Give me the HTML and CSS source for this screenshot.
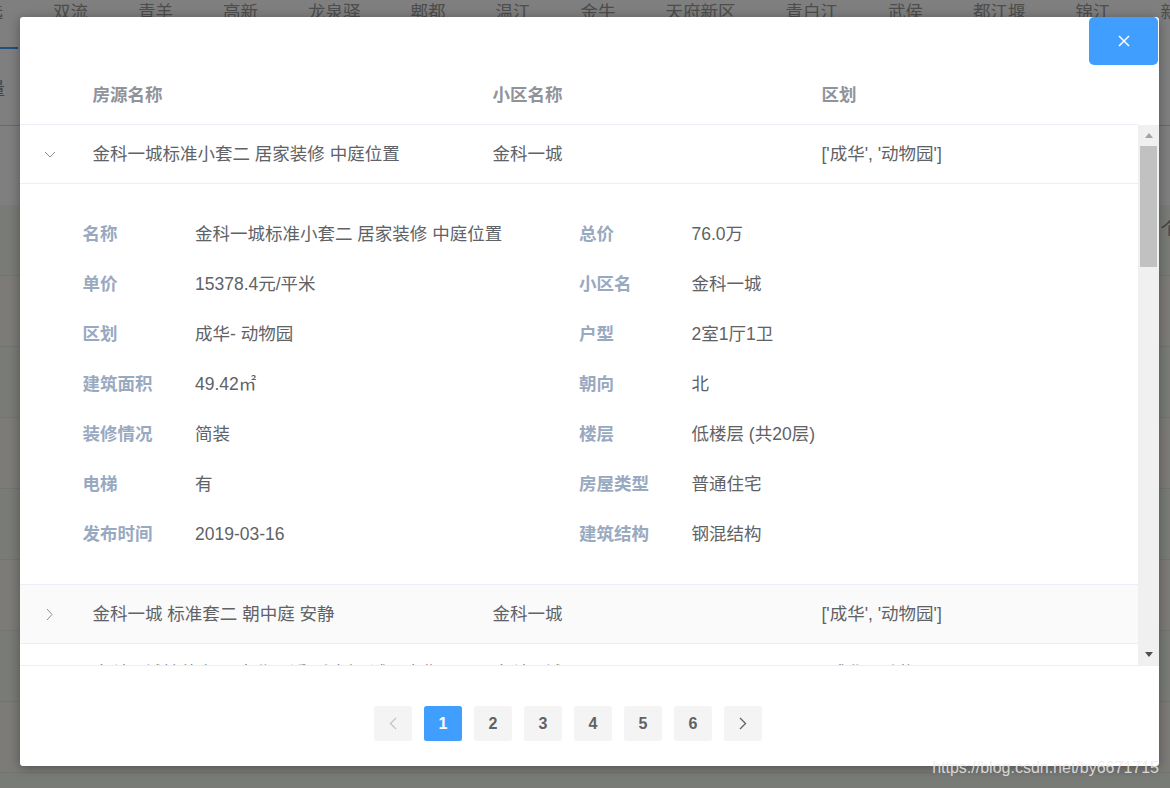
FILE: index.html
```html
<!DOCTYPE html>
<html lang="zh-CN">
<head>
<meta charset="utf-8">
<title>房源列表</title>
<link rel="stylesheet" href="styles.css">
</head>
<body>
<div class="page">
  <nav class="district-tabs">
    <span class="tab">全选</span>
    <span class="tab">双流</span>
    <span class="tab">青羊</span>
    <span class="tab">高新</span>
    <span class="tab">龙泉驿</span>
    <span class="tab">郫都</span>
    <span class="tab">温江</span>
    <span class="tab">金牛</span>
    <span class="tab">天府新区</span>
    <span class="tab">青白江</span>
    <span class="tab">武侯</span>
    <span class="tab">都江堰</span>
    <span class="tab">锦江</span>
    <span class="tab">新都</span>
  </nav>
  <div class="active-bar"></div>
  <div class="filter-row"><span class="filter-label">数量</span><span class="filter-right">个</span></div>
  <div class="bg-table">
    <div class="bg-row bg-first"></div>
    <div class="bg-row bg-green"></div>
    <div class="bg-row bg-warm"></div>
    <div class="bg-row bg-green"></div>
    <div class="bg-row bg-warm"></div>
    <div class="bg-row bg-green"></div>
    <div class="bg-row bg-warm"></div>
    <div class="bg-row bg-green"></div>
    <div class="bg-row bg-warm"></div>
    <div class="bg-row bg-green"></div>
  </div>
</div>

<div class="mask"></div>

<div class="dialog">
  <button class="dialog-close" type="button" aria-label="关闭">
    <svg width="12" height="12" viewBox="0 0 12 12"><path d="M1 1 L11 11 M11 1 L1 11" stroke="#fff" stroke-width="1.5" fill="none"/></svg>
  </button>

  <div class="table">
    <div class="thead">
      <div class="head-row">
        <div class="cell"></div>
        <div class="cell">房源名称</div>
        <div class="cell">小区名称</div>
        <div class="cell">区划</div>
      </div>
      <div class="gutter"></div>
    </div>

    <div class="body-wrap">
      <div class="tbody">
        <div class="row">
          <div class="cell expand-cell">
            <svg width="12" height="7" viewBox="0 0 12 7"><path d="M1 1 L6 6 L11 1" stroke="#8c8f96" stroke-width="1" fill="none"/></svg>
          </div>
          <div class="cell">金科一城标准小套二 居家装修 中庭位置</div>
          <div class="cell">金科一城</div>
          <div class="cell">['成华', '动物园']</div>
        </div>
        <div class="expanded">
          <div class="form-item"><span class="label">名称</span><span class="value">金科一城标准小套二 居家装修 中庭位置</span></div>
          <div class="form-item"><span class="label">总价</span><span class="value">76.0万</span></div>
          <div class="form-item"><span class="label">单价</span><span class="value">15378.4元/平米</span></div>
          <div class="form-item"><span class="label">小区名</span><span class="value">金科一城</span></div>
          <div class="form-item"><span class="label">区划</span><span class="value">成华- 动物园</span></div>
          <div class="form-item"><span class="label">户型</span><span class="value">2室1厅1卫</span></div>
          <div class="form-item"><span class="label">建筑面积</span><span class="value">49.42㎡</span></div>
          <div class="form-item"><span class="label">朝向</span><span class="value">北</span></div>
          <div class="form-item"><span class="label">装修情况</span><span class="value">简装</span></div>
          <div class="form-item"><span class="label">楼层</span><span class="value">低楼层 (共20层)</span></div>
          <div class="form-item"><span class="label">电梯</span><span class="value">有</span></div>
          <div class="form-item"><span class="label">房屋类型</span><span class="value">普通住宅</span></div>
          <div class="form-item"><span class="label">发布时间</span><span class="value">2019-03-16</span></div>
          <div class="form-item"><span class="label">建筑结构</span><span class="value">钢混结构</span></div>
        </div>
        <div class="row row-hover">
          <div class="cell expand-cell">
            <svg width="7" height="13" viewBox="0 0 7 13"><path d="M1 1 L6 6.5 L1 12" stroke="#8c8f96" stroke-width="1" fill="none"/></svg>
          </div>
          <div class="cell">金科一城 标准套二 朝中庭 安静</div>
          <div class="cell">金科一城</div>
          <div class="cell">['成华', '动物园']</div>
        </div>
        <div class="row">
          <div class="cell expand-cell">
            <svg width="7" height="13" viewBox="0 0 7 13"><path d="M1 1 L6 6.5 L1 12" stroke="#8c8f96" stroke-width="1" fill="none"/></svg>
          </div>
          <div class="cell">金科一城精装套三 南北通透 采光好 诚心出售</div>
          <div class="cell">金科一城</div>
          <div class="cell">['成华', '动物园']</div>
        </div>
      </div>
      <div class="scrollbar">
        <div class="sb-btn"><span class="tri-up"></span></div>
        <div class="sb-thumb"></div>
        <div class="sb-space"></div>
        <div class="sb-btn"><span class="tri-down"></span></div>
      </div>
    </div>
  </div>

  <div class="pager">
    <button class="pg-btn pg-disabled" type="button">
      <svg width="8" height="13" viewBox="0 0 8 13"><path d="M7 1 L1.5 6.5 L7 12" stroke="#c0c4cc" stroke-width="1.3" fill="none"/></svg>
    </button>
    <button class="pg-btn pg-active" type="button">1</button>
    <button class="pg-btn" type="button">2</button>
    <button class="pg-btn" type="button">3</button>
    <button class="pg-btn" type="button">4</button>
    <button class="pg-btn" type="button">5</button>
    <button class="pg-btn" type="button">6</button>
    <button class="pg-btn" type="button">
      <svg width="8" height="13" viewBox="0 0 8 13"><path d="M1 1 L6.5 6.5 L1 12" stroke="#606266" stroke-width="1.3" fill="none"/></svg>
    </button>
  </div>
</div>

<div class="watermark">https://blog.csdn.net/by6671715</div>
</body>
</html>
```

FILE: styles.css
```css
* { box-sizing: border-box; }

html, body {
  margin: 0;
  padding: 0;
}

body {
  width: 1170px;
  height: 788px;
  overflow: hidden;
  position: relative;
  background: #ffffff;
  color: #606266;
  font-family: "Liberation Sans", "Noto Sans CJK SC", sans-serif;
}

/* ---------- page behind the dialog ---------- */
.page {
  height: 788px;
  overflow: hidden;
}

.district-tabs {
  display: flex;
  margin-left: -57px;
  white-space: nowrap;
  font-size: 17.5px;
  line-height: 24px;
  color: #9a9a9a;
}

.tab {
  flex: none;
  padding: 0 25px;
}

.active-bar {
  width: 18px;
  height: 2px;
  margin-top: 23px;
  background: #409eff;
}

.filter-row {
  height: 77px;
  display: flex;
  align-items: center;
  justify-content: space-between;
  border-bottom: 1px solid #cfd2d8;
  font-size: 17.5px;
  color: #8a8a8a;
}

.filter-label {
  margin-left: -30px;
}

.filter-right {
  margin-right: -8px;
  margin-top: 280px;
}

.bg-row {
  height: 71px;
  border-bottom: 1px solid #e4e6ea;
}

.bg-first {
  height: 79px;
  border-bottom: 0;
}

.bg-green { background: #f2f7ee; }
.bg-warm { background: #fbf6f0; }

.mask {
  position: absolute;
  inset: 0;
  background: rgba(0, 0, 0, 0.5);
}

/* ---------- dialog ---------- */
.dialog {
  position: absolute;
  left: 20px;
  top: 17px;
  width: 1139px;
  height: 749px;
  padding-top: 49px;
  background: #ffffff;
  border-radius: 3px;
  box-shadow: 0 2px 12px rgba(0, 0, 0, 0.35);
  display: flex;
  flex-direction: column;
}

.dialog-close {
  position: absolute;
  top: 0;
  right: 1px;
  width: 69px;
  height: 48px;
  border: 0;
  padding: 0;
  border-radius: 5px;
  background: #409eff;
  display: flex;
  align-items: center;
  justify-content: center;
}

.table {
  font-size: 17.5px;
  line-height: 23px;
}

.thead {
  display: flex;
}

.head-row,
.row {
  display: grid;
  grid-template-columns: 60px 400px 329px 1fr;
  align-items: center;
  height: 59px;
  border-bottom: 1px solid #ebeef5;
}

.head-row {
  flex: 1;
  font-weight: bold;
  color: #909399;
}

.gutter {
  width: 21px;
  flex: none;
}

.cell {
  padding-left: 12.5px;
  white-space: nowrap;
}

.expand-cell {
  padding-left: 0;
  display: flex;
  justify-content: center;
  align-items: center;
  padding-right: 1px;
}

.row-hover {
  background: #fafafa;
}

.body-wrap {
  display: flex;
  height: 541px;
  border-bottom: 1px solid #ebeef5;
}

.tbody {
  flex: 1;
  overflow: hidden;
}

.expanded {
  display: grid;
  grid-template-columns: 1fr 1fr;
  padding: 25px 62.5px;
  height: 401px;
  border-bottom: 1px solid #ebeef5;
}

.form-item {
  display: flex;
  align-items: center;
  height: 50px;
  white-space: nowrap;
}

.label {
  width: 112.5px;
  flex: none;
  font-weight: bold;
  color: #99a9bf;
}

.value {
  color: #606266;
}

/* ---------- scrollbar ---------- */
.scrollbar {
  width: 21px;
  flex: none;
  background: #f0f0f0;
  display: flex;
  flex-direction: column;
}

.sb-btn {
  height: 21px;
  flex: none;
  display: flex;
  align-items: center;
  justify-content: center;
}

.tri-up {
  width: 0;
  height: 0;
  border-left: 4.5px solid transparent;
  border-right: 4.5px solid transparent;
  border-bottom: 5px solid #a3a3a3;
}

.tri-down {
  width: 0;
  height: 0;
  border-left: 4.5px solid transparent;
  border-right: 4.5px solid transparent;
  border-top: 5px solid #505050;
}

.sb-thumb {
  height: 121px;
  margin: 0 2px;
  background: #c1c1c1;
  flex: none;
}

.sb-space {
  flex: 1;
}

/* ---------- pagination ---------- */
.pager {
  display: flex;
  gap: 12px;
  margin-top: 40px;
  margin-left: 354px;
}

.pg-btn {
  width: 38px;
  height: 35px;
  border: 0;
  padding: 0;
  border-radius: 2.5px;
  background: #f4f4f5;
  color: #606266;
  font-family: "Liberation Sans", "Noto Sans CJK SC", sans-serif;
  font-size: 16px;
  font-weight: bold;
  display: flex;
  align-items: center;
  justify-content: center;
}

.pg-active {
  background: #409eff;
  color: #ffffff;
}

/* ---------- watermark ---------- */
.watermark {
  position: absolute;
  right: 11px;
  top: 759px;
  font-size: 16px;
  line-height: 18px;
  color: rgba(235, 235, 235, 0.85);
  white-space: nowrap;
}
```
